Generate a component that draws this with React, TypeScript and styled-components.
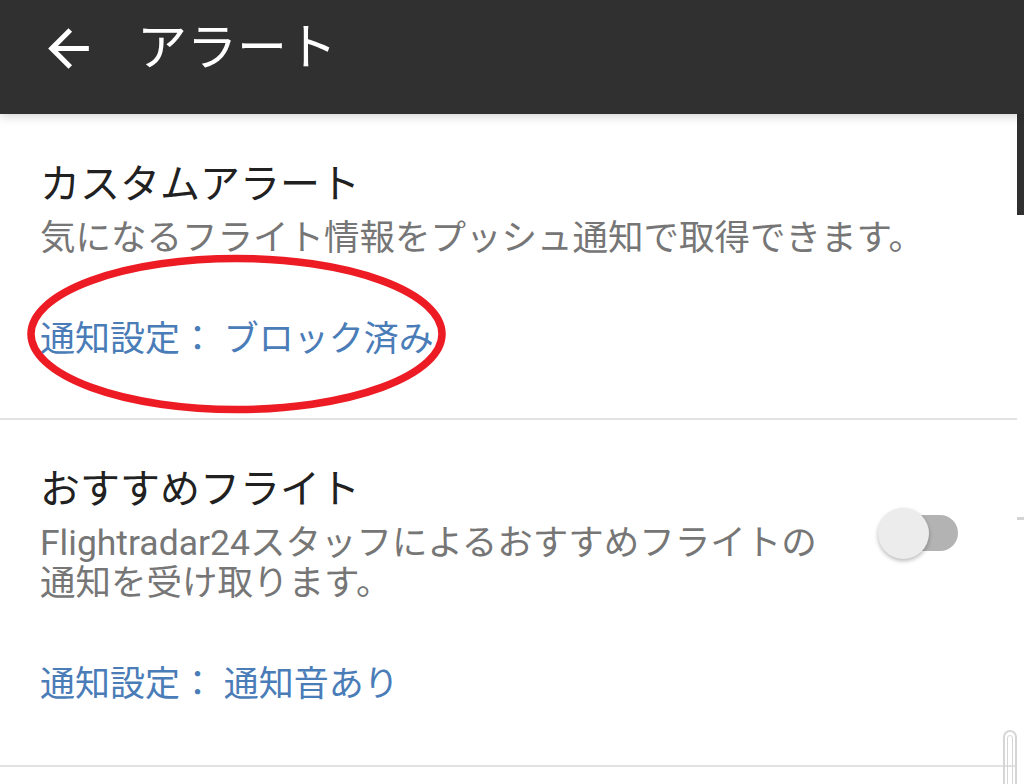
import styled, { createGlobalStyle } from "styled-components";

const Global = createGlobalStyle`
  html, body {
    margin: 0;
    padding: 0;
    background: #ffffff;
  }
  body {
    font-family: Roboto, "Noto Sans CJK JP", "Noto Sans", sans-serif;
  }
`;

const Screen = styled.div`
  position: relative;
  width: 1024px;
  height: 784px;
  overflow: hidden;
  display: flex;
  flex-direction: column;
  background: #ffffff;
`;

const AppBar = styled.header`
  position: relative;
  z-index: 2;
  height: 114px;
  box-sizing: border-box;
  padding: 0 0 18px 38px;
  display: flex;
  align-items: center;
  gap: 38px;
  background: #303030;
  box-shadow: 0 2px 10px rgba(0, 0, 0, 0.18);
`;

const BackButton = styled.button`
  width: 61px;
  height: 61px;
  padding: 0;
  border: 0;
  background: none;
  color: #ffffff;
  display: flex;
  align-items: center;
  justify-content: center;
`;

const AppTitle = styled.h1`
  margin: 0;
  font-size: 50px;
  font-weight: 400;
  line-height: 60px;
  color: #ffffff;
`;

const Body = styled.div`
  flex: 1;
  display: flex;
  min-height: 0;
`;

const PrefList = styled.main`
  width: 1017px;
  display: flex;
  flex-direction: column;
`;

const Pref = styled.section<{ $top: number; $bottom: number }>`
  padding: ${(p) => p.$top}px 0 ${(p) => p.$bottom}px 40px;
  display: flex;
  flex-direction: column;
`;

const PrefRow = styled.div`
  display: flex;
  align-items: center;
  gap: 53px;
  padding-right: 59px;
`;

const PrefText = styled.div`
  flex: 1;
  min-width: 0;
  display: flex;
  flex-direction: column;
`;

const PrefTitle = styled.div`
  font-size: 40px;
  line-height: 52px;
  color: #212121;
`;

const PrefSummary = styled.div`
  margin-top: 7px;
  font-size: 35.5px;
  line-height: 40px;
  color: #767676;
`;

const PrefLink = styled.div`
  margin-top: 62px;
  font-size: 35px;
  line-height: 40px;
  color: #4a7cb8;
  white-space: pre;
`;

const Divider = styled.hr`
  margin: 0;
  border: 0;
  height: 2px;
  background: #e2e2e2;
`;

const Switch = styled.div`
  position: relative;
  flex: none;
  width: 80px;
  height: 51px;
`;

const SwitchTrack = styled.span`
  position: absolute;
  right: 0;
  top: 7px;
  width: 72px;
  height: 36px;
  border-radius: 18px;
  background: #b3b3b3;
`;

const SwitchThumb = styled.span`
  position: absolute;
  left: 0;
  top: 0;
  width: 51px;
  height: 51px;
  border-radius: 50%;
  background: #ececec;
  box-shadow: 0 2px 4px rgba(0, 0, 0, 0.28);
`;

const EdgeStrip = styled.aside`
  width: 7px;
  display: flex;
  flex-direction: column;
`;

const EdgeBlock = styled.div`
  height: 101px;
  background: #303030;
`;

const EdgeDash = styled.div`
  margin-top: 302px;
  height: 3px;
  background: #d4d4d4;
`;

const Annotation = styled.svg`
  position: absolute;
  left: 0;
  top: 0;
  z-index: 3;
  pointer-events: none;
`;

const ScrollThumb = styled.div`
  position: absolute;
  left: 1003px;
  top: 730px;
  width: 10px;
  height: 70px;
  border: 2px solid #d6d6d6;
  border-radius: 7px;
  &::after {
    content: "";
    position: absolute;
    left: 2px;
    right: 2px;
    top: 3px;
    bottom: 0;
    border: 1px solid #d6d6d6;
    border-radius: 4px;
  }
`;

export default function App() {
  return (
    <Screen>
      <Global />
      <AppBar>
        <BackButton aria-label="戻る">
          <svg width="61" height="61" viewBox="0 0 24 24" fill="currentColor">
            <path d="M20 11H7.83l5.59-5.59L12 4l-8 8 8 8 1.41-1.41L7.83 13H20v-2z" />
          </svg>
        </BackButton>
        <AppTitle>アラート</AppTitle>
      </AppBar>

      <Body>
        <PrefList>
          <Pref $top={45} $bottom={58}>
            <PrefTitle>カスタムアラート</PrefTitle>
            <PrefSummary>気になるフライト情報をプッシュ通知で取得できます。</PrefSummary>
            <PrefLink>通知設定： ブロック済み</PrefLink>
          </Pref>
          <Divider />
          <Pref $top={44} $bottom={60}>
            <PrefRow>
              <PrefText>
                <PrefTitle>おすすめフライト</PrefTitle>
                <PrefSummary>
                  Flightradar24スタッフによるおすすめフライトの通知を受け取ります。
                </PrefSummary>
              </PrefText>
              <Switch role="switch" aria-checked={false}>
                <SwitchTrack />
                <SwitchThumb />
              </Switch>
            </PrefRow>
            <PrefLink>通知設定： 通知音あり</PrefLink>
          </Pref>
          <Divider />
        </PrefList>
        <EdgeStrip>
          <EdgeBlock />
          <EdgeDash />
        </EdgeStrip>
      </Body>

      <ScrollThumb />
      <Annotation width="1024" height="784" viewBox="0 0 1024 784">
        <ellipse
          cx="236.5"
          cy="334"
          rx="205.5"
          ry="75.5"
          fill="none"
          stroke="#ed1c24"
          strokeWidth="7.5"
        />
      </Annotation>
    </Screen>
  );
}
